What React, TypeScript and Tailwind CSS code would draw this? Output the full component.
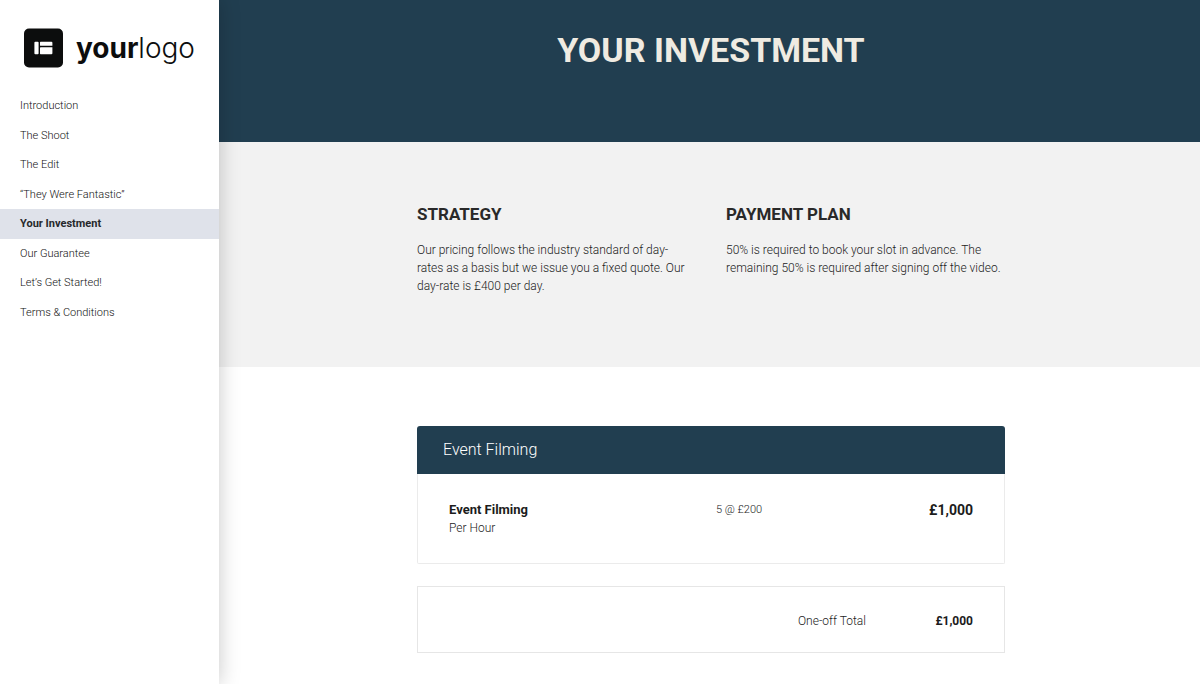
const navItems = [
  'Introduction',
  'The Shoot',
  'The Edit',
  '“They Were Fantastic”',
  'Your Investment',
  'Our Guarantee',
  'Let’s Get Started!',
  'Terms & Conditions',
];

function Logo() {
  return (
    <a href="#" className="flex items-center gap-3 px-6 pt-7 text-[#0c0d0d]">
      <svg viewBox="0 0 40 40" className="size-10 shrink-0" aria-hidden="true">
        <rect x="0" y="0.5" width="39" height="39" rx="5" fill="#0c0d0d" />
        <rect x="10.400" y="13.800" width="4.200" height="12.400" rx="1" fill="#fff" />
        <path
          d="M16.600 13.800h10.800a1 1 0 0 1 1 1v3H16.600a.6.6 0 0 1-.6-.6v-2.800a.6.6 0 0 1 .6-.6zM16.600 19.300h11.800v5.900a1 1 0 0 1-1 1h-10.800a.6.6 0 0 1-.6-.6v-5.700a.6.6 0 0 1 .6-.6z"
          fill="#fff"
        />
      </svg>
      <span className="font-['Inter',sans-serif] text-[28px] leading-[38px] font-light">
        <span className="font-bold">your</span>logo
      </span>
    </a>
  );
}

function Sidebar() {
  return (
    <aside className="relative z-10 w-[219px] shrink-0 bg-white shadow-[0_0_20px_rgba(0,0,0,0.22)]">
      <Logo />
      <nav className="mt-[23px]">
        <ul className="grid h-[236px] auto-rows-fr">
          {navItems.map((item) => {
            const active = item === 'Your Investment';
            return (
              <li key={item} className="flex">
                <a
                  href="#"
                  aria-current={active ? 'page' : undefined}
                  className={
                    active
                      ? 'flex flex-1 items-center bg-[#dfe2ea] pt-px pl-5 text-[11px] font-bold text-[#26282b]'
                      : 'flex flex-1 items-center pt-px pl-5 text-[11px] font-light text-[#111]'
                  }
                >
                  {item}
                </a>
              </li>
            );
          })}
        </ul>
      </nav>
    </aside>
  );
}

export default function App() {
  return (
    <div className="flex min-h-screen bg-white font-['Roboto',sans-serif] text-[#1c1c1c]">
      <Sidebar />
      <main className="min-w-0 flex-1">
        <header className="bg-[#213e50] pt-7 pb-[70px] pl-[3px]">
          <h1 className="text-center text-[34px] leading-[44px] font-bold text-[#efebe2]">
            YOUR INVESTMENT
          </h1>
        </header>

        <section className="bg-[#f2f2f2] pt-15 pb-[72px] pl-[3px]">
          <div className="mx-auto grid max-w-[588px] grid-cols-2 gap-[30px]">
            <div className="pr-2.5">
              <h2 className="text-[17px] leading-6 font-bold text-[#292929]">STRATEGY</h2>
              <p className="mt-[15px] text-[12px] leading-[18px] font-light">
                Our pricing follows the industry standard of day-rates as a basis but we issue you a
                fixed quote. Our day-rate is £400 per day.
              </p>
            </div>
            <div>
              <h2 className="text-[17px] leading-6 font-bold text-[#292929]">PAYMENT PLAN</h2>
              <p className="mt-[15px] text-[12px] leading-[18px] font-light">
                50% is required to book your slot in advance. The remaining 50% is required after
                signing off the video.
              </p>
            </div>
          </div>
        </section>

        <section className="pt-[59px] pb-8 pl-[3px]">
          <div className="mx-auto max-w-[588px]">
            <h2 className="rounded-t-[3px] bg-[#213e50] px-[26px] py-3 text-[16px] leading-6 font-light text-white">
              Event Filming
            </h2>
            <div className="rounded-b-[2px] border border-t-0 border-[#ebebeb] px-[31px] pt-[27px] pb-[26px]">
              <table className="w-full table-fixed border-collapse text-[12px] leading-[18px]">
                <tbody>
                  <tr className="align-top">
                    <th scope="row" className="w-[267px] text-left font-light">
                      <span className="block text-[13px] font-bold">Event Filming</span>
                      <span className="block">Per Hour</span>
                    </th>
                    <td className="text-[11px] font-light">5 @ £200</td>
                    <td className="text-right text-[14px] font-bold">£1,000</td>
                  </tr>
                </tbody>
              </table>
            </div>

            <dl className="mt-[22px] flex items-center justify-end border border-[#e6e6e6] px-[31px] pt-[25px] pb-[22px] text-[12px] leading-[18px]">
              <dt className="font-light">One-off Total</dt>
              <dd className="w-[107px] text-right font-bold">£1,000</dd>
            </dl>
          </div>
        </section>
      </main>
    </div>
  );
}
